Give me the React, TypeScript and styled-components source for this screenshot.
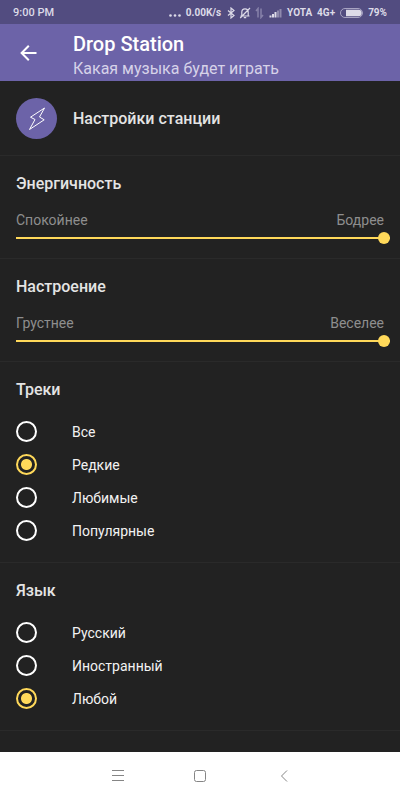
import React, { useState } from "react";
import styled, { createGlobalStyle } from "styled-components";

const GlobalStyle = createGlobalStyle`
  * { box-sizing: border-box; }
  body {
    margin: 0;
    background: #222222;
    font-family: Roboto, "Noto Sans", sans-serif;
  }
`;

const Screen = styled.div`
  display: flex;
  flex-direction: column;
  min-height: 100vh;
  background: #222222;
  color: #e4e4e4;
`;

const StatusBar = styled.div`
  display: flex;
  align-items: center;
  justify-content: space-between;
  height: 24px;
  padding: 1px 13px 0;
  background: #524c80;
  color: #dddbe8;
  line-height: 16px;
`;

const Clock = styled.time`
  font-size: 11px;
  font-weight: 500;
`;

const StatusGroup = styled.div`
  display: flex;
  align-items: center;
  gap: 5px;
  font-size: 10px;
  font-weight: 700;
  white-space: nowrap;
`;

const Header = styled.header`
  display: flex;
  align-items: center;
  height: 57px;
  padding: 0 16px;
  background: #6c63a8;
`;

const BackButton = styled.button`
  display: flex;
  width: 57px;
  padding: 0;
  border: 0;
  background: none;
  color: #ffffff;
`;

const Titles = styled.div`
  padding-top: 6px;
`;

const Title = styled.h1`
  margin: 0;
  color: #ffffff;
  font-size: 20px;
  font-weight: 500;
  line-height: 26px;
`;

const Subtitle = styled.p`
  margin: 0;
  color: #d6d2e8;
  font-size: 16px;
  line-height: 24px;
`;

const Content = styled.main`
  flex: 1;
`;

const Station = styled.section`
  display: flex;
  align-items: center;
  gap: 16px;
  padding: 17px 16px 16px;
  border-bottom: 1px solid #2a2a2a;
`;

const Badge = styled.div`
  display: flex;
  align-items: center;
  justify-content: center;
  width: 41px;
  height: 41px;
  border-radius: 50%;
  background: #6c63a8;
`;

const Heading = styled.h2`
  margin: 0;
  font-size: 16px;
  font-weight: 500;
  line-height: 24px;
`;

const Group = styled.section`
  padding: 16px 16px 14px;
  border-bottom: 1px solid #2a2a2a;
`;

const RangeLabels = styled.div`
  display: flex;
  justify-content: space-between;
  margin-top: 14px;
  color: #8e8e8e;
  font-size: 14px;
  line-height: 20px;
`;

const RangeRow = styled.div`
  display: flex;
  margin: 2px -6px 0 0;
`;

const Range = styled.input`
  flex: 1;
  min-width: 0;
  height: 12px;
  margin: 0;
  appearance: none;
  background: none;
  &::-webkit-slider-runnable-track {
    height: 2px;
    background: #ffd95a;
  }
  &::-webkit-slider-thumb {
    appearance: none;
    width: 12px;
    height: 12px;
    margin-top: -5px;
    border-radius: 50%;
    background: #ffd95a;
  }
`;

const Options = styled.div`
  display: flex;
  flex-direction: column;
  padding: 13px 0 1px;
`;

const Option = styled.label`
  display: flex;
  align-items: center;
  gap: 35px;
  height: 33px;
  color: #f2f2f2;
  font-size: 14px;
  line-height: 20px;
`;

const Radio = styled.input`
  width: 21px;
  height: 21px;
  margin: 0;
  appearance: none;
  border: 2px solid #ffffff;
  border-radius: 50%;
  &:checked {
    border-color: #ffd95a;
    background: radial-gradient(circle, #ffd95a 5px, transparent 6px);
  }
`;

const NavBar = styled.nav`
  display: flex;
  align-items: center;
  justify-content: center;
  gap: 60px;
  height: 48px;
  background: #ffffff;
`;

const NavButton = styled.button`
  display: flex;
  justify-content: center;
  width: 24px;
  padding: 0;
  border: 0;
  background: none;
  color: #858585;
`;

function RangeGroup({ title, low, high }: { title: string; low: string; high: string }) {
  const [value, setValue] = useState(100);
  return (
    <Group>
      <Heading>{title}</Heading>
      <RangeLabels>
        <span>{low}</span>
        <span>{high}</span>
      </RangeLabels>
      <RangeRow>
        <Range
          type="range"
          aria-label={title}
          value={value}
          onChange={(e) => setValue(Number(e.target.value))}
        />
      </RangeRow>
    </Group>
  );
}

function ChoiceGroup({ title, name, options, initial }: { title: string; name: string; options: string[]; initial: string }) {
  const [selected, setSelected] = useState(initial);
  return (
    <Group>
      <Heading>{title}</Heading>
      <Options role="radiogroup" aria-label={title}>
        {options.map((option) => (
          <Option key={option}>
            <Radio type="radio" name={name} checked={selected === option} onChange={() => setSelected(option)} />
            {option}
          </Option>
        ))}
      </Options>
    </Group>
  );
}

function StatusIcons() {
  return (
    <svg width="56" height="12" viewBox="0 0 56 12" fill="none" stroke="#dddbe8" aria-hidden="true">
      <path d="M2 3.5 8 8.5 5 11V1L8 3.5 2 8.5" strokeWidth="1.2" />
      <path d="M14.5 9h9M15.8 8.5V5.2c0-2 1.2-3.4 3.2-3.4s3.2 1.4 3.2 3.4v3.3M17.8 10.6h2.4M24 1l-9.8 10" strokeWidth="1.2" />
      <path d="M32 10.5v-9L30 4M35 1.5v9L37 8" stroke="#8681a9" strokeWidth="1.5" />
      <path d="M43.5 10.5h2v-2h-2zM46 10.5h2V7h-2zM48.5 10.5h2V5h-2z" fill="#dddbe8" stroke="none" />
      <path d="M51 10.5h2v-7h-2zM53.5 10.5h2V2h-2z" fill="#8f8aad" stroke="none" />
    </svg>
  );
}

export default function App() {
  return (
    <Screen>
      <GlobalStyle />
      <StatusBar>
        <Clock>9:00 PM</Clock>
        <StatusGroup>
          <svg width="12" height="12" viewBox="0 0 12 12" fill="#dddbe8" aria-hidden="true">
            <circle cx="1.5" cy="8.5" r="1.3" />
            <circle cx="6" cy="8.5" r="1.3" />
            <circle cx="10.5" cy="8.5" r="1.3" />
          </svg>
          <span>0.00K/s</span>
          <StatusIcons />
          <span>YOTA</span>
          <span>4G+</span>
          <svg width="23" height="10" viewBox="0 0 23 10" aria-hidden="true">
            <rect x="0.5" y="0.5" width="22" height="9" rx="4.5" fill="none" stroke="#a7a3c2" />
            <path d="M6 1.8h12.5a3.2 3.2 0 0 1 0 6.4H6z" fill="#dddbe8" />
          </svg>
          <span>79%</span>
        </StatusGroup>
      </StatusBar>
      <Header>
        <BackButton aria-label="Назад">
          <svg width="24" height="24" viewBox="0 0 24 24" fill="none" stroke="currentColor" strokeWidth="2">
            <path d="M20.5 12H6M12.8 4.8 5.6 12l7.2 7.2" />
          </svg>
        </BackButton>
        <Titles>
          <Title>Drop Station</Title>
          <Subtitle>Какая музыка будет играть</Subtitle>
        </Titles>
      </Header>
      <Content>
        <Station>
          <Badge>
            <svg width="20" height="24" viewBox="0 0 20 24" fill="none" stroke="#ffffff" strokeLinejoin="round" aria-hidden="true">
              <path d="M17.5 1 3.5 10.2 8 12.5 2.5 22.5 17.2 12.8 12.5 10z" />
            </svg>
          </Badge>
          <Heading>Настройки станции</Heading>
        </Station>
        <RangeGroup title="Энергичность" low="Спокойнее" high="Бодрее" />
        <RangeGroup title="Настроение" low="Грустнее" high="Веселее" />
        <ChoiceGroup title="Треки" name="tracks" options={["Все", "Редкие", "Любимые", "Популярные"]} initial="Редкие" />
        <ChoiceGroup title="Язык" name="language" options={["Русский", "Иностранный", "Любой"]} initial="Любой" />
      </Content>
      <NavBar>
        <NavButton aria-label="Меню">
          <svg width="16" height="12" viewBox="0 0 16 12" fill="none" stroke="currentColor">
            <path d="M4 0.5h12M4 5.5h12M4 10.5h12" />
          </svg>
        </NavButton>
        <NavButton aria-label="Домой">
          <svg width="12" height="12" viewBox="0 0 12 12" fill="none" stroke="currentColor">
            <rect x="0.5" y="0.5" width="11" height="11" rx="2" />
          </svg>
        </NavButton>
        <NavButton aria-label="Назад">
          <svg width="12" height="12" viewBox="0 0 12 12" fill="none" stroke="currentColor">
            <path d="M9 0.5 3.5 6 9 11.5" />
          </svg>
        </NavButton>
      </NavBar>
    </Screen>
  );
}
